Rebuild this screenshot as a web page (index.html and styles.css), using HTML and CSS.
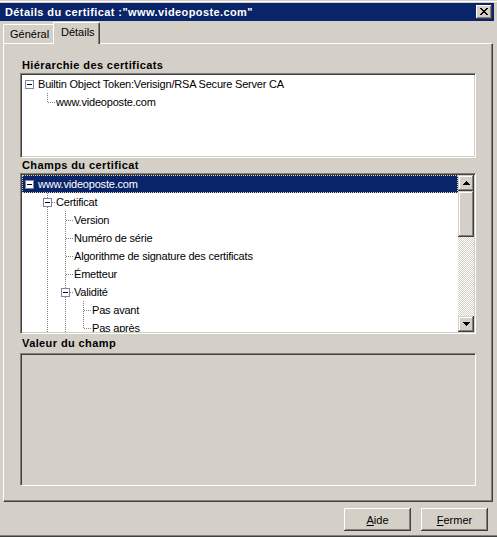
FILE: index.html
```html
<!DOCTYPE html>
<html lang="fr">
<head>
<meta charset="utf-8">
<title>Détails du certificat</title>
<link rel="stylesheet" href="styles.css">
</head>
<body>
<div class="window">
  <div class="titlebar">
    <span class="title">Détails du certificat :"www.videoposte.com"</span>
    <span class="close"><svg viewBox="0 0 8 7" width="8" height="7" shape-rendering="crispEdges"><path d="M0 0h2v1h-2z M6 0h2v1h-2z M1 1h2v1h-2z M5 1h2v1h-2z M2 2h4v1h-4z M3 3h2v1h-2z M2 4h4v1h-4z M1 5h2v1h-2z M5 5h2v1h-2z M0 6h2v1h-2z M6 6h2v1h-2z" fill="#000"/></svg></span>
  </div>
  <div class="client">
    <div class="tabs">
      <div class="tab">Général</div>
      <div class="tab active">Détails</div>
    </div>
    <div class="panel">
      <div class="label">Hiérarchie des certificats</div>
      <div class="box box-hier">
        <div class="tree">
          <div class="row"><span class="c0"><span class="exp"><i></i></span></span><span class="txt">Builtin Object Token:Verisign/RSA Secure Server CA</span></div>
          <div class="row"><span class="c0"></span><span class="c ell"></span><span class="txt">www.videoposte.com</span></div>
        </div>
      </div>
      <div class="label">Champs du certificat</div>
      <div class="box box-fields">
        <div class="tree">
          <div class="row sel"><span class="c0"><span class="exp"><i></i></span></span><span class="txt">www.videoposte.com</span></div>
          <div class="row"><span class="c0"></span><span class="c tee xc"><span class="exp"><i></i></span></span><span class="txt">Certificat</span></div>
          <div class="row"><span class="c0"></span><span class="c pipe"></span><span class="c tee"></span><span class="txt">Version</span></div>
          <div class="row"><span class="c0"></span><span class="c pipe"></span><span class="c tee"></span><span class="txt">Numéro de série</span></div>
          <div class="row"><span class="c0"></span><span class="c pipe"></span><span class="c tee"></span><span class="txt">Algorithme de signature des certificats</span></div>
          <div class="row"><span class="c0"></span><span class="c pipe"></span><span class="c tee"></span><span class="txt">Émetteur</span></div>
          <div class="row"><span class="c0"></span><span class="c pipe"></span><span class="c tee xc"><span class="exp"><i></i></span></span><span class="txt">Validité</span></div>
          <div class="row"><span class="c0"></span><span class="c pipe"></span><span class="c pipe"></span><span class="c tee"></span><span class="txt">Pas avant</span></div>
          <div class="row"><span class="c0"></span><span class="c pipe"></span><span class="c pipe"></span><span class="c ell"></span><span class="txt">Pas après</span></div>
        </div>
        <div class="vscroll">
          <div class="sb-btn"><svg viewBox="0 0 7 4" width="7" height="4" shape-rendering="crispEdges"><path d="M3 0h1v1h-1z M2 1h3v1h-3z M1 2h5v1h-5z M0 3h7v1h-7z" fill="#000"/></svg></div>
          <div class="sb-thumb"></div>
          <div class="sb-track"></div>
          <div class="sb-btn"><svg viewBox="0 0 7 4" width="7" height="4" shape-rendering="crispEdges"><path d="M0 0h7v1h-7z M1 1h5v1h-5z M2 2h3v1h-3z M3 3h1v1h-1z" fill="#000"/></svg></div>
        </div>
      </div>
      <div class="label l3">Valeur du champ</div>
      <div class="box box-value"></div>
    </div>
    <div class="buttons">
      <button class="btn"><u>A</u>ide</button>
      <button class="btn"><u>F</u>ermer</button>
    </div>
  </div>
</div>
</body>
</html>
```

FILE: styles.css
```css
* {
  box-sizing: border-box;
  margin: 0;
  padding: 0;
}

html, body {
  width: 497px;
  height: 537px;
  overflow: hidden;
  background: #d4d0c8;
}

body {
  font-family: "Liberation Sans", Arial, sans-serif;
  font-size: 11px;
  color: #000;
  --dv: repeating-linear-gradient(to bottom, #808080 0 1px, transparent 1px 2px);
  --dh: repeating-linear-gradient(to right, #808080 0 1px, transparent 1px 2px);
}

.window {
  width: 497px;
  height: 537px;
  padding: 3px 3px 3px 0;
  display: flex;
  flex-direction: column;
  background: #d4d0c8;
  box-shadow: inset 0 -1px #404040, inset 0 1px #d4d0c8, inset 0 -2px #808080, inset 0 2px #fff;
}

.titlebar {
  height: 18px;
  flex: none;
  background: #0a246a;
  color: #fff;
  display: flex;
  align-items: center;
  justify-content: space-between;
  padding: 0 2px 0 5px;
}

.title {
  font-weight: bold;
  font-size: 11px;
  letter-spacing: 0.4px;
  white-space: nowrap;
}

.close {
  width: 16px;
  height: 14px;
  background: #d4d0c8;
  box-shadow: inset -1px -1px #404040, inset 1px 1px #fff, inset -2px -2px #808080;
  display: flex;
  padding: 3px 0 0 4px;
}

.close svg {
  display: block;
}

.client {
  flex: 1;
  display: flex;
  flex-direction: column;
  padding-left: 3px;
}

.tabs {
  height: 22px;
  flex: none;
  display: flex;
  align-items: flex-end;
}

.tab {
  width: 50px;
  height: 19px;
  line-height: 18px;
  padding-left: 6px;
  border-top: 1px solid #fff;
  border-left: 1px solid #fff;
  border-top-left-radius: 2px;
  white-space: nowrap;
}

.tab.active {
  width: 47px;
  height: 22px;
  margin-bottom: -1px;
  padding-left: 7px;
  position: relative;
  z-index: 1;
  background: #d4d0c8;
  border-right: 1px solid #404040;
  border-top-right-radius: 2px;
  box-shadow: inset -1px 0 #808080;
}

.panel {
  width: 490px;
  height: 459px;
  flex: none;
  border-top: 1px solid #fff;
  border-left: 1px solid #fff;
  border-right: 1px solid #404040;
  border-bottom: 1px solid #404040;
  box-shadow: inset -1px -1px #808080;
  padding: 14px 16px 15px 16px;
  display: flex;
  flex-direction: column;
}

.label {
  height: 15px;
  line-height: 15px;
  flex: none;
  padding-left: 2px;
  font-weight: bold;
  letter-spacing: 0.4px;
  white-space: nowrap;
}

.l3 {
  margin: 2px 0;
}

.box {
  flex: none;
  padding: 1px;
  border: 1px solid;
  border-color: #808080 #fff #fff #808080;
  box-shadow: inset 1px 1px #404040, inset -1px -1px #d4d0c8;
  background: #fff;
  overflow: hidden;
}

.box-hier {
  height: 85px;
}

.box-fields {
  height: 161px;
  display: flex;
}

.box-value {
  height: 133px;
  background: #d4d0c8;
}

.tree {
  flex: 1;
  overflow: hidden;
}

.row {
  display: flex;
  height: 18px;
  white-space: nowrap;
}

.row.sel {
  background: #0a246a;
  color: #fff;
  outline: 1px dotted #e6d48c;
  outline-offset: -1px;
}

.txt {
  line-height: 18px;
  letter-spacing: -0.2px;
}

.c0 {
  width: 16px;
  flex: none;
  padding: 5px 0 0 3px;
}

.c {
  width: 18px;
  flex: none;
}

.xc {
  padding: 5px 0 0 5px;
}

.pipe {
  background: var(--dv) 9px 0 / 1px 100% no-repeat;
}

.tee {
  background: var(--dv) 9px 0 / 1px 100% no-repeat, var(--dh) 10px 9px / 8px 1px no-repeat;
}

.ell {
  background: var(--dv) 9px 0 / 1px 10px no-repeat, var(--dh) 10px 9px / 8px 1px no-repeat;
}

.exp {
  width: 9px;
  height: 9px;
  border: 1px solid #8080a8;
  background: #fff;
  display: flex;
  align-items: center;
  justify-content: center;
}

.exp i {
  width: 5px;
  height: 1px;
  background: #000;
}

.vscroll {
  width: 16px;
  flex: none;
  display: flex;
  flex-direction: column;
}

.sb-btn {
  height: 16px;
  flex: none;
  background: #d4d0c8;
  box-shadow: inset -1px -1px #404040, inset 1px 1px #d4d0c8, inset -2px -2px #808080, inset 2px 2px #fff;
  display: flex;
  align-items: center;
  justify-content: center;
}

.sb-btn svg {
  display: block;
}

.sb-thumb {
  height: 46px;
  flex: none;
  background: #d4d0c8;
  box-shadow: inset -1px -1px #404040, inset 1px 1px #d4d0c8, inset -2px -2px #808080, inset 2px 2px #fff;
}

.sb-track {
  flex: 1;
  background: repeating-conic-gradient(#fff 0 25%, #d4d0c8 0 50%) 0 0 / 2px 2px;
}

.buttons {
  display: flex;
  justify-content: flex-end;
  gap: 10px;
  margin-top: 6px;
  padding-right: 6px;
}

.btn {
  width: 67px;
  height: 23px;
  font-family: "Liberation Sans", Arial, sans-serif;
  font-size: 11px;
  color: #000;
  background: #d4d0c8;
  border: none;
  box-shadow: inset -1px -1px #404040, inset 1px 1px #fff, inset -2px -2px #808080, inset 2px 2px #d4d0c8;
}
```
